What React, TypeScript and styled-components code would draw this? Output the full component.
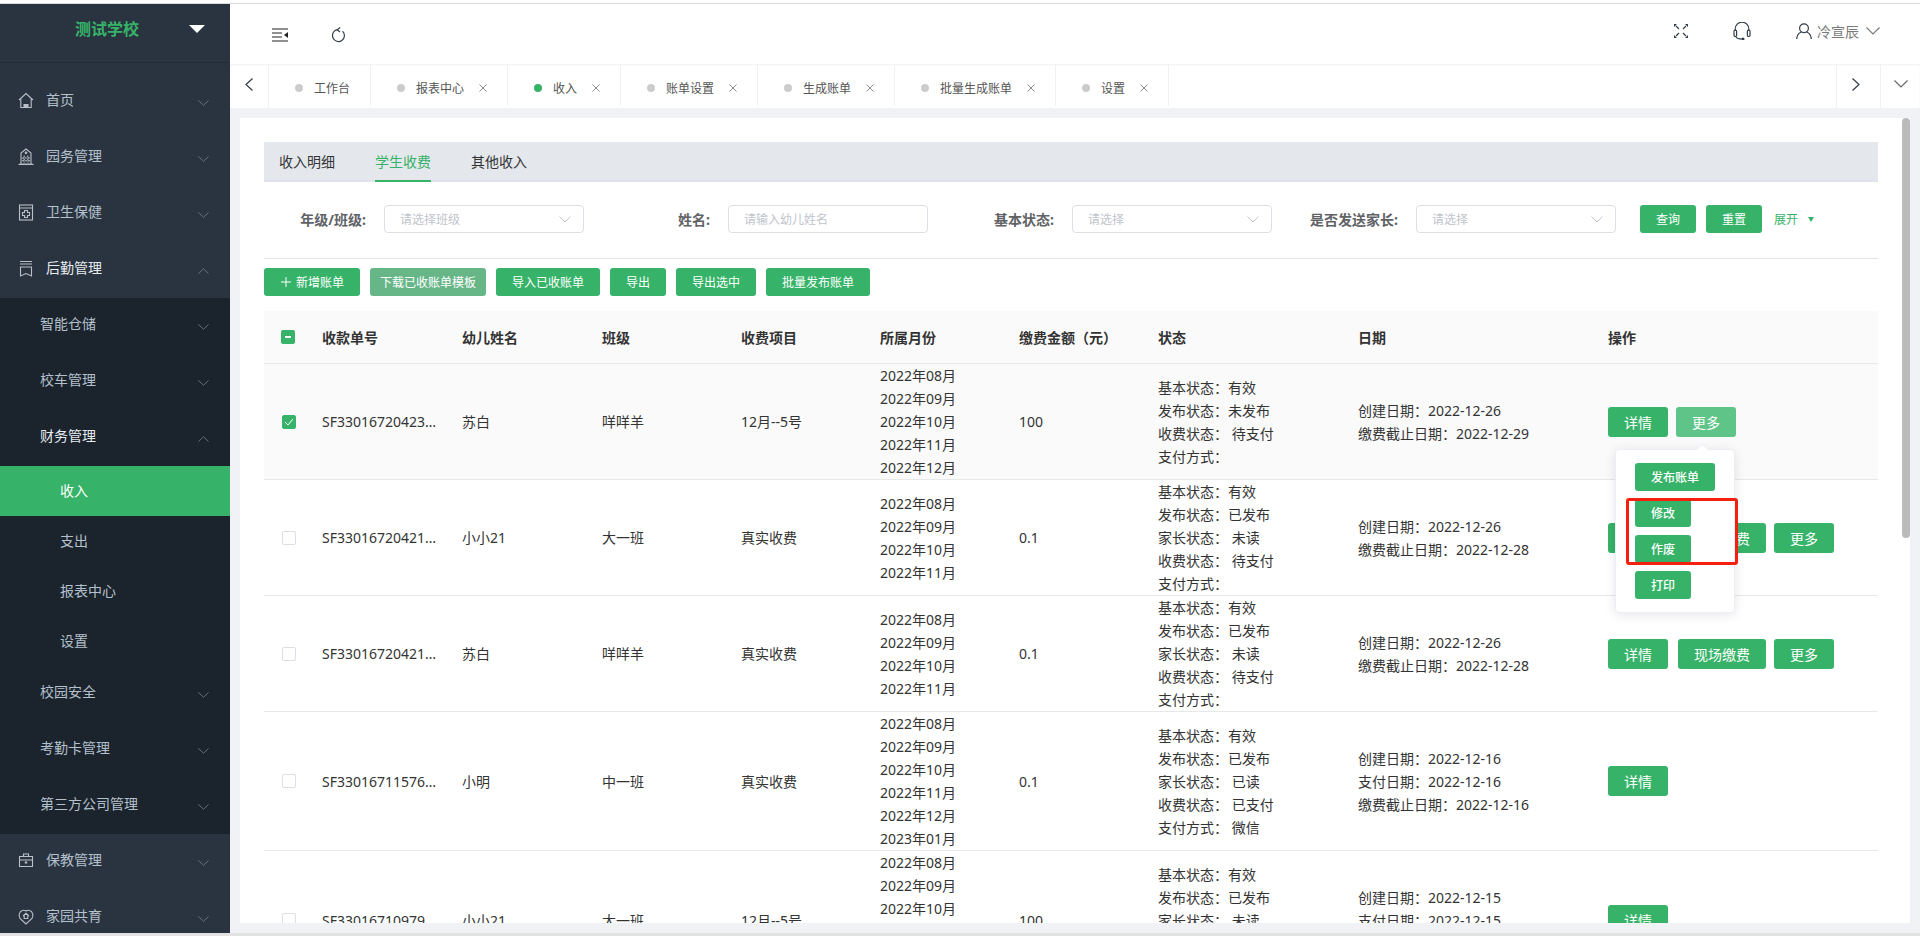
import { ReactNode } from 'react'
import styled, { createGlobalStyle } from 'styled-components'

const GREEN = '#36b368'

const GlobalStyle = createGlobalStyle`
  html, body {
    margin: 0;
    height: 100%;
    overflow: hidden;
    background: #fff;
  }

  * {
    box-sizing: border-box;
  }

  body {
    font-family: 'Noto Sans', 'Noto Sans CJK SC', sans-serif;
    font-size: 14px;
    color: #333;
  }
`

const Page = styled.div`
  width: 1920px;
  height: 936px;
  display: flex;
  flex-direction: column;
  overflow: hidden;
`

const TopRule = styled.div`
  height: 4px;
  flex-shrink: 0;
  border-bottom: 1px solid #dcdcdc;
`

const Frame = styled.div`
  flex: 1;
  min-height: 0;
  display: flex;
`

const BottomStrip = styled.div`
  height: 3px;
  flex-shrink: 0;
  background: #e2e2e2;
`

// sidebar

const Sidebar = styled.aside`
  width: 230px;
  flex-shrink: 0;
  overflow: hidden;
  background: #2a3440;
`

const LogoRow = styled.div`
  height: 59px;
  margin-bottom: 11px;
  padding: 0 25px 9px 75px;
  display: flex;
  align-items: center;
  justify-content: space-between;
  border-bottom: 1px solid #232c36;
`

const LogoText = styled.div`
  font-size: 16px;
  font-weight: 700;
  line-height: 24px;
  color: ${GREEN};
`

const LogoCaret = styled.div`
  width: 0;
  height: 0;
  border-left: 8px solid transparent;
  border-right: 8px solid transparent;
  border-top: 8px solid #fff;
`

const MenuRow = styled.div<{ $indent: number; $active?: boolean }>`
  height: 56px;
  padding: 0 21px 4px ${p => p.$indent}px;
  display: flex;
  align-items: center;
  gap: 12px;
  color: ${p => (p.$active ? '#e6ebf0' : '#b4c0cc')};
  line-height: 20px;
`

const MenuIcon = styled.svg`
  width: 16px;
  height: 17px;
  flex-shrink: 0;
  fill: none;
  stroke: #b9bfc6;
  stroke-width: 1.1;
`

const MenuLabel = styled.span`
  flex: 1;
`

const MenuChevron = styled.svg<{ $open?: boolean }>`
  width: 11px;
  height: 6px;
  margin-top: 6px;
  fill: none;
  stroke: #66717d;
  stroke-width: 1;
  transform: ${p => (p.$open ? 'rotate(180deg)' : 'none')};
`

const SubMenu = styled.div`
  background: #1b232c;
`

const LeafRow = styled.div<{ $active?: boolean }>`
  height: 50px;
  padding: 0 0 2px 60px;
  display: flex;
  align-items: center;
  background: ${p => (p.$active ? GREEN : 'transparent')};
  color: ${p => (p.$active ? '#fff' : '#b4c0cc')};
`

function Chevron({ open }: { open?: boolean }) {
  return (
    <MenuChevron viewBox="0 0 11 6" $open={open}>
      <polyline points="0.5,0.5 5.5,5.2 10.5,0.5" />
    </MenuChevron>
  )
}

function TopMenu({
  icon,
  label,
  open,
  active,
}: {
  icon: ReactNode
  label: string
  open?: boolean
  active?: boolean
}) {
  return (
    <MenuRow $indent={18} $active={active}>
      <MenuIcon viewBox="0 0 16 17">{icon}</MenuIcon>
      <MenuLabel>{label}</MenuLabel>
      <Chevron open={open} />
    </MenuRow>
  )
}

function SubMenuRow({ label, open }: { label: string; open?: boolean }) {
  return (
    <MenuRow $indent={40} $active={open}>
      <MenuLabel>{label}</MenuLabel>
      <Chevron open={open} />
    </MenuRow>
  )
}

const homeIcon = (
  <>
    <path d="M1 8 8 1.5 15 8M2.8 7v8.5h10.4V7" />
    <path d="M6 15.5v-3h4v3z" fill="#b9bfc6" />
  </>
)
const buildingIcon = (
  <>
    <path d="M8 1 3 5v11h10V5zM0.5 16.4h15" />
    <path d="M6.2 7.5v7M9.8 7.5v7M4 10h8M4 12.8h8" strokeDasharray="2 1" />
    <circle cx="8" cy="4.8" r="0.8" fill="#b9bfc6" />
  </>
)
const clinicIcon = (
  <>
    <rect x="1.5" y="1" width="13" height="15" />
    <path d="M1.5 4h13M6.5 6.5h3v2h2v3h-2v2h-3v-2h-2v-3h2z" />
  </>
)
const ledgerIcon = (
  <>
    <path d="M2 1.5h12M2 4h12" />
    <path d="M2.5 7h11v9L8 13.5 2.5 16z" />
  </>
)
const caseIcon = (
  <>
    <path d="M1.5 4.5h13v10h-13zM5.5 4.5V2h5v2.5M1.5 8h13" />
    <path d="M6.8 10.5h2.4" strokeWidth="2" />
  </>
)
const pinIcon = (
  <>
    <path d="M8 16 2 10.5C.3 8 1 3.5 4.5 2.5 6 2 7.2 2.4 8 3c.8-.6 2-1 3.5-.5 3.5 1 4.2 5.5 2.5 8z" />
    <path d="M5 8 8 5.3 11 8M6.2 7.5v3h3.6v-3" />
  </>
)

// top bar

const Main = styled.main`
  flex: 1;
  min-width: 0;
  display: flex;
  flex-direction: column;
`

const HeaderBar = styled.header`
  height: 60px;
  flex-shrink: 0;
  padding: 0 40px 0 42px;
  display: flex;
  align-items: center;
  justify-content: space-between;
`

const HeaderLeft = styled.div`
  padding-top: 2px;
  display: flex;
  align-items: center;
  gap: 43px;
`

const HeaderRight = styled.div`
  padding-bottom: 6px;
  display: flex;
  align-items: center;
  gap: 45px;
`

const UserChip = styled.div`
  display: flex;
  align-items: center;
  color: #7a7a7a;
`

const UserName = styled.span`
  margin: 0 7px 0 5px;
`

const BarIcon = styled.svg`
  display: block;
  fill: none;
  stroke: #333c47;
  stroke-width: 1.2;
`

// tab bar

const TabBar = styled.div`
  height: 44px;
  flex-shrink: 0;
  display: flex;
  background: #fff;
  box-shadow: inset 0 1px 2px rgba(0, 0, 0, 0.06);
`

const ScrollArrow = styled.div<{ $width: number; $edge: 'left' | 'right'; $nudge?: number }>`
  width: ${p => p.$width}px;
  flex-shrink: 0;
  display: flex;
  align-items: center;
  justify-content: center;
  padding: 0 ${p => p.$nudge ?? 0}px 4px 0;
  border-${p => (p.$edge === 'left' ? 'right' : 'left')}: 1px solid #f0f1f3;
`

const TabList = styled.div`
  flex: 1;
  height: 42px;
  display: flex;
`

const TabItem = styled.div`
  padding: 5px 20px 0 26px;
  display: flex;
  align-items: center;
  border-right: 1px solid #f0f1f3;
  font-size: 12px;
  color: #555;
`

const TabDot = styled.span<{ $active?: boolean }>`
  width: 8px;
  height: 8px;
  margin-right: 11px;
  border-radius: 50%;
  background: ${p => (p.$active ? GREEN : '#cccccc')};
`

const TabClose = styled.svg`
  width: 8px;
  height: 8px;
  margin-left: 15px;
  fill: none;
  stroke: #8d8d8d;
  stroke-width: 1;
`

function Tab({ label, active, closable = true }: { label: string; active?: boolean; closable?: boolean }) {
  return (
    <TabItem>
      <TabDot $active={active} />
      {label}
      {closable ? (
        <TabClose viewBox="0 0 8 8">
          <path d="M0.5 0.5l7 7M7.5 0.5l-7 7" />
        </TabClose>
      ) : null}
    </TabItem>
  )
}

// content

const Content = styled.div`
  flex: 1;
  min-height: 0;
  padding: 10px;
  background: #f0f2f5;
`

const Card = styled.div`
  position: relative;
  height: 100%;
  padding: 24px 32px 0 24px;
  overflow: hidden;
  background: #fff;
`

const ScrollThumb = styled.div`
  position: absolute;
  top: 0;
  right: 0;
  width: 8px;
  height: 420px;
  border-radius: 4px;
  background: #bbbbbb;
`

const SubTabs = styled.div`
  height: 40px;
  padding-left: 15px;
  display: flex;
  gap: 40px;
  background: #e4e7ec;
  border-bottom: 2px solid #e0e3ea;
`

const SubTab = styled.div<{ $active?: boolean }>`
  height: 40px;
  line-height: 40px;
  color: ${p => (p.$active ? GREEN : '#333')};
  border-bottom: 2px solid ${p => (p.$active ? GREEN : 'transparent')};
`

const FilterRow = styled.div`
  padding: 23px 0 25px;
  display: flex;
  align-items: center;
  border-bottom: 1px solid #e2e4ea;
`

const FilterLabel = styled.label<{ $width: number }>`
  width: ${p => p.$width}px;
  margin-right: 16px;
  padding-right: 2px;
  flex-shrink: 0;
  text-align: right;
  font-weight: 700;
  color: #606266;
  white-space: nowrap;
`

const Field = styled.div`
  width: 200px;
  height: 28px;
  padding: 0 12px 0 15px;
  flex-shrink: 0;
  display: flex;
  align-items: center;
  justify-content: space-between;
  border: 1px solid #dcdfe6;
  border-radius: 4px;
  font-size: 12px;
  color: #c0c4cc;
`

const FieldChevron = styled.svg`
  width: 12px;
  height: 7px;
  fill: none;
  stroke: #c0c4cc;
  stroke-width: 1;
`

const FilterButtons = styled.div`
  margin-left: 24px;
  display: flex;
  align-items: center;
  gap: 10px;
`

const ExpandToggle = styled.div`
  margin-left: 2px;
  display: flex;
  align-items: center;
  gap: 10px;
  font-size: 12px;
  color: ${GREEN};
`

const ExpandCaret = styled.span`
  width: 0;
  height: 0;
  border-left: 3.5px solid transparent;
  border-right: 3.5px solid transparent;
  border-top: 5px solid ${GREEN};
`

const TONES = {
  solid: GREEN,
  soft: '#5fc487',
  muted: '#67b688',
}

const Button = styled.button<{ $tone?: keyof typeof TONES; $size?: 'small' | 'row' }>`
  height: ${p => (p.$size === 'row' ? 30 : 28)}px;
  padding: 0 16px;
  display: inline-flex;
  align-items: center;
  justify-content: center;
  flex-shrink: 0;
  border: 0;
  border-radius: 3px;
  background: ${p => TONES[p.$tone ?? 'solid']};
  color: #fff;
  font-family: inherit;
  font-size: ${p => (p.$size === 'row' ? 14 : 12)}px;
  white-space: nowrap;
`

const AddButton = styled(Button)`
  gap: 4px;
`

const TemplateButton = styled(Button)`
  padding: 0 10px;
`

const PlusIcon = styled.svg`
  width: 12px;
  height: 12px;
  fill: none;
  stroke: #fff;
  stroke-width: 1;
`

const ActionRow = styled.div`
  margin: 9px 0 15px;
  display: flex;
  gap: 10px;
`

const GRID_COLUMNS = '48px 140px 140px 139px 139px 139px 139px 200px 250px 280px'

const HeaderRow = styled.div`
  height: 53px;
  display: grid;
  grid-template-columns: ${GRID_COLUMNS};
  align-items: center;
  background: #fafafa;
  border-bottom: 1px solid #e6e8ec;
  font-weight: 700;
  color: #333;
`

const DataRow = styled.div<{ $selected?: boolean }>`
  display: grid;
  grid-template-columns: ${GRID_COLUMNS};
  align-items: center;
  line-height: 23px;
  background: ${p => (p.$selected ? '#fafafa' : '#fff')};
  border-bottom: 1px solid #e6e8ec;
`

const Cell = styled.div`
  min-width: 0;
  padding-left: 10px;
  white-space: nowrap;
`

const OrderNo = styled(Cell)`
  padding-right: 10px;
  overflow: hidden;
  text-overflow: ellipsis;
`

const CheckCell = styled.div<{ $inset: number }>`
  padding-left: ${p => p.$inset}px;
  display: flex;
`

const CheckBox = styled.span<{ $on?: boolean }>`
  width: 14px;
  height: 14px;
  display: flex;
  align-items: center;
  justify-content: center;
  border: 1px solid ${p => (p.$on ? GREEN : '#dcdfe6')};
  border-radius: 2px;
  background: ${p => (p.$on ? GREEN : '#fff')};
`

const CheckMark = styled.svg`
  width: 10px;
  height: 8px;
  fill: none;
  stroke: #fff;
  stroke-width: 1;
`

const Indeterminate = styled.span`
  width: 6px;
  height: 2px;
  background: #fff;
`

const OpsCell = styled(Cell)`
  display: flex;
  align-items: center;
`

const MoreAnchor = styled.div<{ $gap: number }>`
  position: relative;
  margin-left: ${p => p.$gap}px;
`

const Popover = styled.div`
  position: absolute;
  z-index: 2;
  top: 42px;
  left: -61px;
  width: 120px;
  padding: 13px 19px;
  display: flex;
  flex-direction: column;
  align-items: flex-start;
  gap: 8px;
  background: #fff;
  border: 1px solid #ebeef5;
  border-radius: 4px;
  box-shadow: 0 2px 12px rgba(0, 0, 0, 0.1);

  &::before {
    content: '';
    position: absolute;
    top: -5px;
    left: 82px;
    width: 8px;
    height: 8px;
    background: #fff;
    border-left: 1px solid #ebeef5;
    border-top: 1px solid #ebeef5;
    transform: rotate(45deg);
  }
`

const PopoverButton = styled(Button)`
  min-width: 56px;
  font-weight: 500;
`

// the red box is a note someone drew on top of the screenshot
const Annotation = styled.div`
  position: absolute;
  top: 48px;
  left: 10px;
  width: 112px;
  height: 67px;
  border: 3px solid #f5200f;
  border-radius: 3px;
  pointer-events: none;
`

type Row = {
  no: string
  name: string
  cls: string
  item: string
  months: string[]
  amount: string
  status: string[]
  dates: string[]
  cash?: boolean
  more?: boolean
  selected?: boolean
}

const MONTHS = ['2022年08月', '2022年09月', '2022年10月', '2022年11月', '2022年12月', '2023年01月']

const ROWS: Row[] = [
  {
    no: 'SF3301672042312688',
    name: '苏白',
    cls: '咩咩羊',
    item: '12月--5号',
    months: MONTHS.slice(0, 5),
    amount: '100',
    status: ['基本状态：有效', '发布状态：未发布', '收费状态： 待支付', '支付方式：'],
    dates: ['创建日期：2022-12-26', '缴费截止日期：2022-12-29'],
    more: true,
    selected: true,
  },
  {
    no: 'SF3301672042156123',
    name: '小小21',
    cls: '大一班',
    item: '真实收费',
    months: MONTHS.slice(0, 4),
    amount: '0.1',
    status: ['基本状态：有效', '发布状态：已发布', '家长状态： 未读', '收费状态： 待支付', '支付方式：'],
    dates: ['创建日期：2022-12-26', '缴费截止日期：2022-12-28'],
    cash: true,
    more: true,
  },
  {
    no: 'SF3301672042131907',
    name: '苏白',
    cls: '咩咩羊',
    item: '真实收费',
    months: MONTHS.slice(0, 4),
    amount: '0.1',
    status: ['基本状态：有效', '发布状态：已发布', '家长状态： 未读', '收费状态： 待支付', '支付方式：'],
    dates: ['创建日期：2022-12-26', '缴费截止日期：2022-12-28'],
    cash: true,
    more: true,
  },
  {
    no: 'SF3301671157644210',
    name: '小明',
    cls: '中一班',
    item: '真实收费',
    months: MONTHS,
    amount: '0.1',
    status: ['基本状态：有效', '发布状态：已发布', '家长状态： 已读', '收费状态： 已支付', '支付方式： 微信'],
    dates: ['创建日期：2022-12-16', '支付日期：2022-12-16', '缴费截止日期：2022-12-16'],
  },
  {
    no: 'SF3301671097933512',
    name: '小小21',
    cls: '大一班',
    item: '12月--5号',
    months: MONTHS,
    amount: '100',
    status: ['基本状态：有效', '发布状态：已发布', '家长状态： 未读', '收费状态： 已支付', '支付方式： 微信'],
    dates: ['创建日期：2022-12-15', '支付日期：2022-12-15', '缴费截止日期：2022-12-15'],
  },
]

function Lines({ items }: { items: string[] }) {
  return (
    <Cell>
      {items.map(line => (
        <div key={line}>{line}</div>
      ))}
    </Cell>
  )
}

function FilterSelect({ placeholder }: { placeholder: string }) {
  return (
    <Field>
      {placeholder}
      <FieldChevron viewBox="0 0 12 7">
        <polyline points="0.5,0.5 6,6 11.5,0.5" />
      </FieldChevron>
    </Field>
  )
}

function MoreMenu() {
  return (
    <Popover>
      <PopoverButton>发布账单</PopoverButton>
      <PopoverButton>修改</PopoverButton>
      <PopoverButton>作废</PopoverButton>
      <PopoverButton>打印</PopoverButton>
      <Annotation />
    </Popover>
  )
}

function TableRow({ row }: { row: Row }) {
  return (
    <DataRow $selected={row.selected}>
      <CheckCell $inset={18}>
        <CheckBox $on={row.selected}>
          {row.selected ? (
            <CheckMark viewBox="0 0 10 8">
              <polyline points="1,4 4,7 9,1" />
            </CheckMark>
          ) : null}
        </CheckBox>
      </CheckCell>
      <OrderNo>{row.no}</OrderNo>
      <Cell>{row.name}</Cell>
      <Cell>{row.cls}</Cell>
      <Cell>{row.item}</Cell>
      <Lines items={row.months} />
      <Cell>{row.amount}</Cell>
      <Lines items={row.status} />
      <Lines items={row.dates} />
      <OpsCell>
        <Button $size="row">详情</Button>
        {row.cash ? (
          <MoreAnchor $gap={10}>
            <Button $size="row">现场缴费</Button>
          </MoreAnchor>
        ) : null}
        {row.more ? (
          <MoreAnchor $gap={8}>
            <Button $size="row" $tone={row.selected ? 'soft' : 'solid'}>
              更多
            </Button>
            {row.selected ? <MoreMenu /> : null}
          </MoreAnchor>
        ) : null}
      </OpsCell>
    </DataRow>
  )
}

export default function App() {
  return (
    <>
      <GlobalStyle />
      <Page>
        <TopRule />
        <Frame>
          <Sidebar>
            <LogoRow>
              <LogoText>测试学校</LogoText>
              <LogoCaret />
            </LogoRow>
            <TopMenu icon={homeIcon} label="首页" />
            <TopMenu icon={buildingIcon} label="园务管理" />
            <TopMenu icon={clinicIcon} label="卫生保健" />
            <TopMenu icon={ledgerIcon} label="后勤管理" open active />
            <SubMenu>
              <SubMenuRow label="智能仓储" />
              <SubMenuRow label="校车管理" />
              <SubMenuRow label="财务管理" open />
              <LeafRow $active>收入</LeafRow>
              <LeafRow>支出</LeafRow>
              <LeafRow>报表中心</LeafRow>
              <LeafRow>设置</LeafRow>
              <SubMenuRow label="校园安全" />
              <SubMenuRow label="考勤卡管理" />
              <SubMenuRow label="第三方公司管理" />
            </SubMenu>
            <TopMenu icon={caseIcon} label="保教管理" />
            <TopMenu icon={pinIcon} label="家园共育" />
          </Sidebar>
          <Main>
            <HeaderBar>
              <HeaderLeft>
                <BarIcon width="16" height="14" viewBox="0 0 16 14" strokeWidth="1.4">
                  <path d="M0 1h16M0 5h10M0 9h10M0 13h16" stroke="#222" />
                  <path d="M16 4v6l-4-3z" fill="#222" stroke="none" />
                </BarIcon>
                <BarIcon width="15" height="16" viewBox="0 0 15 16">
                  <path d="M6.5 2.6a6 6 0 1 0 5 1.5" />
                  <path d="M9.2 0.5 6.2 2.7 9 5" />
                </BarIcon>
              </HeaderLeft>
              <HeaderRight>
                <BarIcon width="14" height="14" viewBox="0 0 14 14" strokeWidth="0.8">
                  <path d="M0 0h3L0 3zM14 0h-3l3 3zM0 14h3l-3-3zM14 14h-3l3-3z" fill="#333c47" stroke="none" />
                  <path d="M2 2 5 5M12 2 9 5M2 12l3-3M12 12 9 9" />
                </BarIcon>
                <BarIcon width="18" height="18" viewBox="0 0 18 18">
                  <path d="M2.2 9V7a6.8 6.8 0 0 1 13.6 0v2" />
                  <rect x="1" y="8" width="2.6" height="6.5" rx="1.3" />
                  <rect x="14.4" y="8" width="2.6" height="6.5" rx="1.3" />
                  <path d="M3 15c1 1.6 3 2 6 2" />
                  <circle cx="10" cy="17" r="0.9" fill="#333c47" />
                </BarIcon>
                <UserChip>
                  <BarIcon width="16" height="16" viewBox="0 0 16 16">
                    <circle cx="8" cy="5.2" r="4.4" />
                    <path d="M0.7 16c.3-3.8 2.6-6.4 4.8-7M15.3 16c-.3-3.8-2.6-6.4-4.8-7" />
                  </BarIcon>
                  <UserName>冷宣辰</UserName>
                  <BarIcon width="14" height="8" viewBox="0 0 14 8">
                    <polyline points="0.5,0.5 7,7 13.5,0.5" stroke="#7a7a7a" />
                  </BarIcon>
                </UserChip>
              </HeaderRight>
            </HeaderBar>
            <TabBar>
              <ScrollArrow $width={39} $edge="left">
                <BarIcon width="8" height="13" viewBox="0 0 8 13">
                  <polyline points="7.5,0.5 1,6.5 7.5,12.5" />
                </BarIcon>
              </ScrollArrow>
              <TabList>
                <Tab label="工作台" closable={false} />
                <Tab label="报表中心" />
                <Tab label="收入" active />
                <Tab label="账单设置" />
                <Tab label="生成账单" />
                <Tab label="批量生成账单" />
                <Tab label="设置" />
              </TabList>
              <ScrollArrow $width={44} $edge="right" $nudge={5}>
                <BarIcon width="8" height="13" viewBox="0 0 8 13">
                  <polyline points="0.5,0.5 7,6.5 0.5,12.5" />
                </BarIcon>
              </ScrollArrow>
              <ScrollArrow $width={40} $edge="right">
                <BarIcon width="14" height="8" viewBox="0 0 14 8">
                  <polyline points="0.5,0.5 7,7 13.5,0.5" stroke="#666" />
                </BarIcon>
              </ScrollArrow>
            </TabBar>
            <Content>
              <Card>
                <ScrollThumb />
                <SubTabs>
                  <SubTab>收入明细</SubTab>
                  <SubTab $active>学生收费</SubTab>
                  <SubTab>其他收入</SubTab>
                </SubTabs>
                <FilterRow>
                  <FilterLabel $width={104}>年级/班级:</FilterLabel>
                  <FilterSelect placeholder="请选择班级" />
                  <FilterLabel $width={128}>姓名:</FilterLabel>
                  <Field>请输入幼儿姓名</Field>
                  <FilterLabel $width={128}>基本状态:</FilterLabel>
                  <FilterSelect placeholder="请选择" />
                  <FilterLabel $width={128}>是否发送家长:</FilterLabel>
                  <FilterSelect placeholder="请选择" />
                  <FilterButtons>
                    <Button>查询</Button>
                    <Button>重置</Button>
                    <ExpandToggle>
                      展开
                      <ExpandCaret />
                    </ExpandToggle>
                  </FilterButtons>
                </FilterRow>
                <ActionRow>
                  <AddButton>
                    <PlusIcon viewBox="0 0 12 12">
                      <path d="M6 1v10M1 6h10" />
                    </PlusIcon>
                    新增账单
                  </AddButton>
                  <TemplateButton $tone="muted">下载已收账单模板</TemplateButton>
                  <Button>导入已收账单</Button>
                  <Button>导出</Button>
                  <Button>导出选中</Button>
                  <Button>批量发布账单</Button>
                </ActionRow>
                <HeaderRow>
                  <CheckCell $inset={17}>
                    <CheckBox $on>
                      <Indeterminate />
                    </CheckBox>
                  </CheckCell>
                  <Cell>收款单号</Cell>
                  <Cell>幼儿姓名</Cell>
                  <Cell>班级</Cell>
                  <Cell>收费项目</Cell>
                  <Cell>所属月份</Cell>
                  <Cell>缴费金额（元）</Cell>
                  <Cell>状态</Cell>
                  <Cell>日期</Cell>
                  <Cell>操作</Cell>
                </HeaderRow>
                {ROWS.map(row => (
                  <TableRow key={row.no} row={row} />
                ))}
              </Card>
            </Content>
          </Main>
        </Frame>
        <BottomStrip />
      </Page>
    </>
  )
}
